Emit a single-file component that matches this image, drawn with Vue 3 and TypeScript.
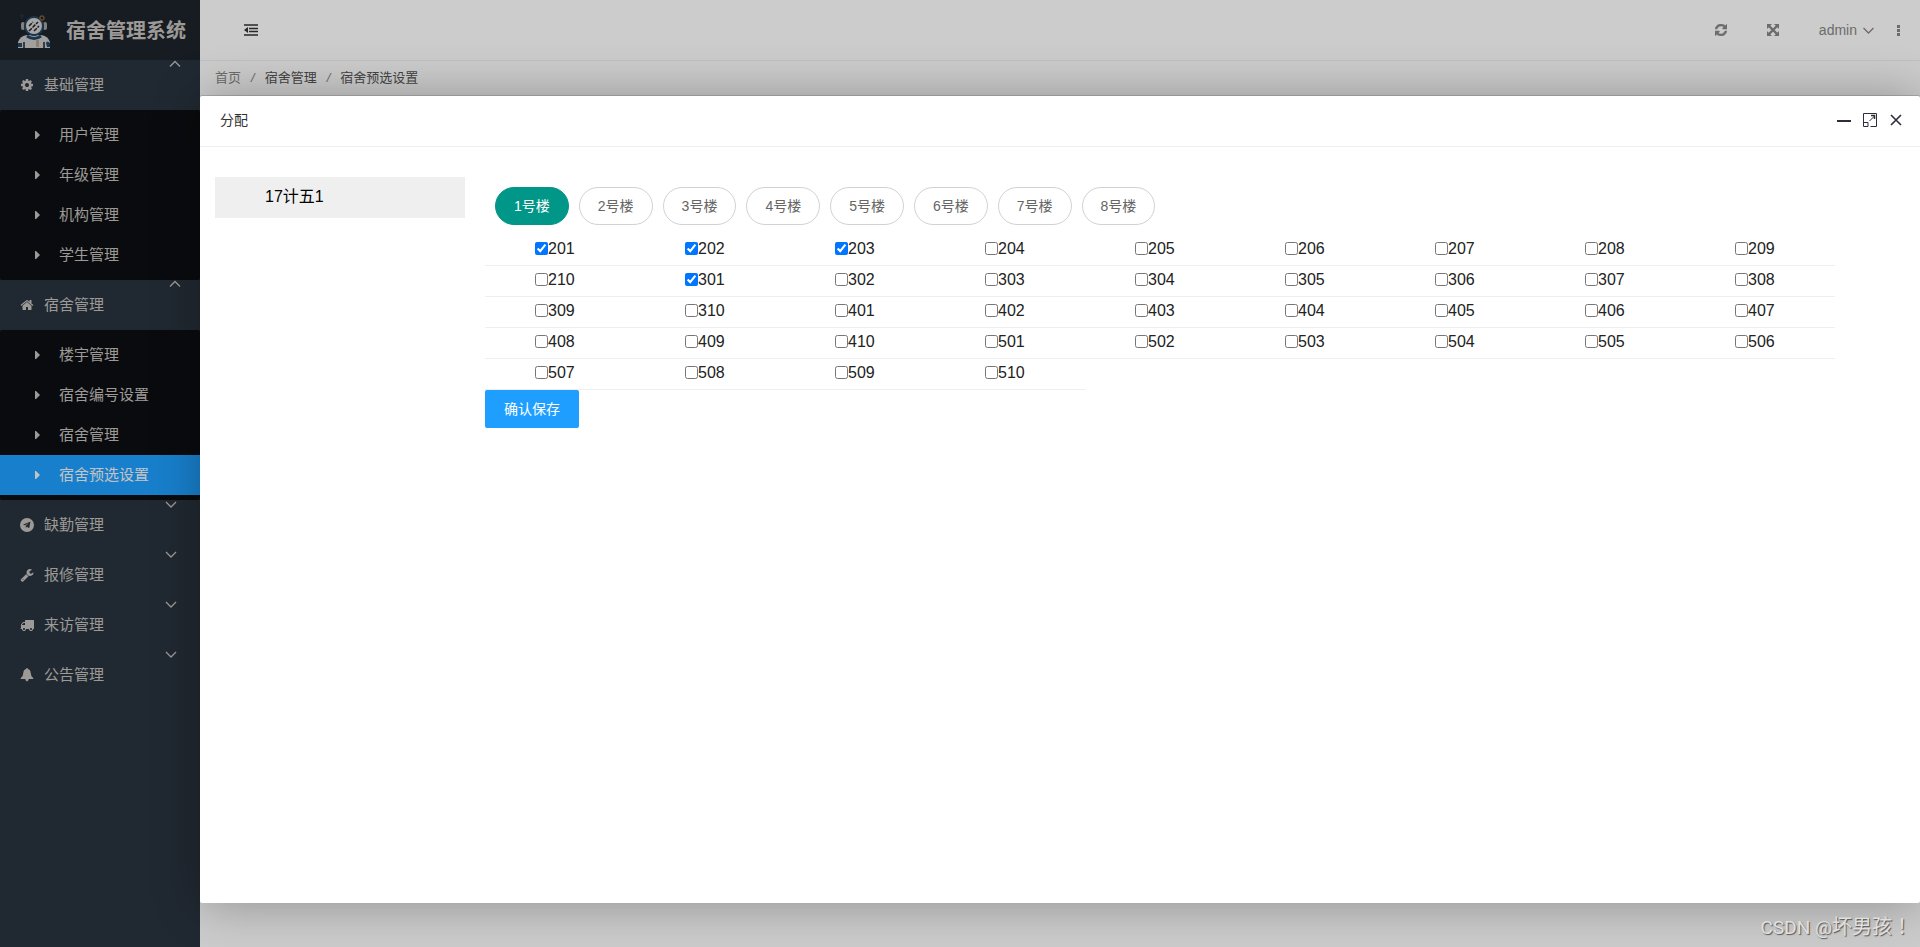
<script setup lang="ts">
import { ref } from 'vue'

interface MenuGroup {
  title: string
  icon: string
  open: boolean
  children: string[]
}

const groups = ref<MenuGroup[]>([
  { title: '基础管理', icon: 'cog', open: true, children: ['用户管理', '年级管理', '机构管理', '学生管理'] },
  { title: '宿舍管理', icon: 'home', open: true, children: ['楼宇管理', '宿舍编号设置', '宿舍管理', '宿舍预选设置'] },
  { title: '缺勤管理', icon: 'plane', open: false, children: [] },
  { title: '报修管理', icon: 'wrench', open: false, children: [] },
  { title: '来访管理', icon: 'truck', open: false, children: [] },
  { title: '公告管理', icon: 'bell', open: false, children: [] },
])

const icons: Record<string, string> = {
  cog: 'M1152 896q0-106-75-181t-181-75-181 75-75 181 75 181 181 75 181-75 75-181zm512-109v222q0 12-8 23t-20 13l-185 28q-19 54-39 91 35 50 107 138 10 12 10 25t-9 23q-27 37-99 108t-94 71q-12 0-26-9l-138-108q-44 23-91 38-16 136-29 186-7 28-36 28h-222q-14 0-24.5-8.500t-11.500-21.500l-28-184q-49-16-90-37l-141 107q-10 9-25 9-14 0-25-11-126-114-165-168-7-10-7-23 0-12 8-23 15-21 51-66.500t54-70.500q-27-50-41-99l-183-27q-13-2-21-12.500t-8-23.500v-222q0-12 8-23t19-13l186-28q14-46 39-92-40-57-107-138-10-12-10-24 0-10 9-23 26-36 98.500-107.500t94.500-71.500q13 0 26 10l138 107q44-23 91-38 16-136 29-186 7-28 36-28h222q14 0 24.500 8.500t11.500 21.500l28 184q49 16 90 37l142-107q9-9 24-9 13 0 25 10 129 119 165 170 7 8 7 22 0 12-8 23-15 21-51 66.500t-54 70.500q26 50 41 98l183 28q13 2 21 12.500t8 23.500z',
  home: 'M1472 992v480q0 26-19 45t-45 19h-384v-384h-256v384h-384q-26 0-45-19t-19-45v-480q0-1 .5-3t.5-3l575-474 575 474q1 2 1 6zm223-69l-62 74q-8 9-21 11h-3q-13 0-21-7l-692-577-692 577q-12 8-24 7-13-2-21-11l-62-74q-8-10-7-23.500t11-21.500l719-599q32-26 76-26t76 26l244 204v-195q0-14 9-23t23-9h192q14 0 23 9t9 23v408l219 182q10 8 11 21.500t-7 23.500z',
  plane: 'M896 0a896 896 0 1 0 0 1792a896 896 0 1 0 0-1792zM1335 480l-150 760q-14 62-66 36l-230-172-112 108q-22 24-52 16l18-236 428-388-530 332-228-72q-46-16 0-48l890-342q40-12 32 6z',
  wrench: 'M448 1472q0-26-19-45t-45-19-45 19-19 45 19 45 45 19 45-19 19-45zm644-420l-682 682q-37 37-90 37-52 0-91-37l-106-108q-38-36-38-90 0-53 38-91l681-681q39 98 114.500 173.500t173.500 114.500zm634-435q0 39-23 106-47 134-164.500 217.500t-258.500 83.500q-185 0-316.500-131.500t-131.500-316.500 131.500-316.500 316.500-131.500q58 0 121.500 16.500t107.500 46.500q16 11 16 28t-16 28l-293 169v224l193 107q5-3 79-48.500t135.500-81 70.500-35.500q15 0 23.500 10t8.500 25z',
  truck: 'M640 1408q0-52-38-90t-90-38-90 38-38 90 38 90 90 38 90-38 38-90zm-384-512h384v-256h-158q-13 0-22 9l-195 195q-9 9-9 22v30zm1280 512q0-52-38-90t-90-38-90 38-38 90 38 90 90 38 90-38 38-90zm256-1088v1024q0 15-4 26.500t-13.500 18.500-16.500 11.500-23.500 6-22.500 2-25.500 0-22.500-.5q0 106-75 181t-181 75-181-75-75-181h-384q0 106-75 181t-181 75-181-75-75-181h-64q-3 0-22.500.5t-25.500 0-22.500-2-23.500-6-16.500-11.500-13.500-18.500-4-26.500q0-26 19-45t45-19v-320q0-8-.5-35t0-38 2.500-34.500 6.500-37 14-30.500 22.500-30l198-198q19-19 50.500-32t58.500-13h160v-192q0-26 19-45t45-19h1024q26 0 45 19t19 45z',
  bell: 'M896 0q110 0 110 120q330 60 360 480q16 480 330 690v130h-580q0 260-220 300q-220-40-220-300h-580v-130q314-210 330-690q30-420 360-480q0-120 110-120z',
}

const current = '宿舍预选设置'
const buildings = ['1号楼', '2号楼', '3号楼', '4号楼', '5号楼', '6号楼', '7号楼', '8号楼']
const building = ref('1号楼')

const rooms: number[] = []
for (let floor = 2; floor <= 5; floor++) {
  for (let n = 1; n <= 10; n++) rooms.push(floor * 100 + n)
}
const selected = ref<number[]>([201, 202, 203, 301])
</script>

<template>
  <div class="page">
    <aside class="side">
      <div class="brand">
        <svg class="astro" viewBox="0 0 34 36" aria-hidden="true">
          <path d="M5 1v5M3 3h4" stroke="#1b3a52" stroke-width="1" fill="none" />
          <path d="M1 35v-6q2-6 9-7h14q7 1 9 7v6z" fill="#c8c8c8" />
          <path d="M10 23q7 5 14 0" stroke="#1d4466" stroke-width="3" fill="none" />
          <path d="M7 29v6M27 29v6" stroke="#1c2027" stroke-width="1.500" />
          <path d="M1 30h4v4h-4zM29 30q1-3 4 0v4h-3z" fill="#1f4668" />
          <path d="M19 27h3v7h-3z" fill="#b3a184" />
          <rect x="4" y="9" width="4" height="8" rx="2" fill="#a0a0a0" />
          <rect x="26" y="9" width="4" height="8" rx="2" fill="#a0a0a0" />
          <circle cx="17" cy="13" r="10" fill="#1c2027" />
          <circle cx="17" cy="13" r="9" fill="#d0d0d0" stroke="#26445e" stroke-width="2" />
          <path d="M12 13l4-4M12 18l9-9M17 18l5-5" stroke="#20242c" stroke-width="1.500" stroke-dasharray="4 1" />
          <circle cx="25" cy="5" r="2" fill="none" stroke="#7c5934" stroke-width="1.500" />
        </svg>
        <h1>宿舍管理系统</h1>
      </div>
      <nav>
        <section v-for="g in groups" :key="g.title">
          <button type="button" class="group" :class="{ open: g.open }" @click="g.open = !g.open">
            <svg class="ico" viewBox="0 0 1792 1792" aria-hidden="true">
              <path :d="icons[g.icon]" fill="currentColor" fill-rule="evenodd" />
            </svg>
            <span>{{ g.title }}</span>
            <svg class="chev" viewBox="0 0 12 8" aria-hidden="true">
              <path :d="g.open ? 'M1 6.500l5-5l5 5' : 'M1 2l5 5l5-5'" fill="none" stroke="currentColor" stroke-width="1.300" />
            </svg>
          </button>
          <ul v-if="g.open && g.children.length">
            <li v-for="c in g.children" :key="c">
              <a href="#" :class="{ active: c === current }">
                <svg class="caret" viewBox="0 0 5 8" aria-hidden="true"><path d="M0 0h1l4 4l-4 4h-1z" fill="currentColor" /></svg>
                {{ c }}
              </a>
            </li>
          </ul>
        </section>
      </nav>
    </aside>

    <div class="main">
      <header>
        <button type="button" aria-label="收起菜单" class="fold">
          <svg width="14" height="12" viewBox="0 0 14 12">
            <path d="M0 1h14M5 4.500h9M5 7.500h9M0 11h14" stroke="currentColor" stroke-width="1.700" fill="none" />
            <path d="M4 3v6l-4-3z" fill="currentColor" />
          </svg>
        </button>
        <div class="tools">
          <button type="button" aria-label="刷新">
            <svg width="12" height="12" viewBox="0 0 1536 1536">
              <path
                fill="currentColor"
                stroke="currentColor"
                stroke-width="70"
                d="M1511 928q0 5-1 7-64 268-268 434.500t-478 166.500q-146 0-282.500-55t-243.500-157l-129 129q-19 19-45 19t-45-19-19-45v-448q0-26 19-45t45-19h448q26 0 45 19t19 45-19 45l-137 137q71 66 161 102t187 36q134 0 250-65t186-179q11-17 53-117 8-23 30-23h192q13 0 22.500 9.500t9.500 22.500zm25-800v448q0 26-19 45t-45 19h-448q-26 0-45-19t-19-45 19-45l138-138q-148-137-349-137-134 0-250 65t-186 179q-11 17-53 117-8 23-30 23h-199q-13 0-22.500-9.500t-9.500-22.500v-7q65-268 270-434.500t480-166.500q146 0 284 55.500t245 156.500l130-129q19-19 45-19t45 19 19 45z"
              />
            </svg>
          </button>
          <button type="button" aria-label="全屏">
            <svg width="12" height="12" viewBox="0 0 12 12" fill="currentColor">
              <path d="M0 0h5l-2 2l3 3l3-3l-2-2h5v5l-2-2l-3 3l3 3l2-2v5h-5l2-2l-3-3l-3 3l2 2h-5v-5l2 2l3-3l-3-3l-2 2z" />
              <path d="M2 2l8 8M10 2l-8 8" stroke="currentColor" stroke-width="2.400" />
            </svg>
          </button>
          <button type="button" class="user">
            admin
            <svg width="11" height="7" viewBox="0 0 11 7"><path d="M.5 1l5 5l5-5" fill="none" stroke="currentColor" stroke-width="1.300" /></svg>
          </button>
          <button type="button" aria-label="更多" class="more">
            <svg width="3" height="11" viewBox="0 0 3 11" fill="currentColor"><path d="M0 0h3v3h-3zM0 4h3v3h-3zM0 8h3v3h-3z" /></svg>
          </button>
        </div>
      </header>
      <nav class="crumbs" aria-label="位置">
        <a href="#">首页</a><i>/</i><span>宿舍管理</span><i>/</i><span>宿舍预选设置</span>
      </nav>
    </div>

    <div class="shade"></div>

    <section class="dialog" role="dialog" aria-labelledby="dialog-title">
      <div class="title">
        <h2 id="dialog-title">分配</h2>
        <button type="button" aria-label="最小化">
          <svg width="14" height="14" viewBox="0 0 14 14"><path d="M0 8h14" stroke="currentColor" stroke-width="2" /></svg>
        </button>
        <button type="button" aria-label="最大化">
          <svg width="14" height="14" viewBox="0 0 14 14" fill="none" stroke="currentColor">
            <path d="M.5 13.500v-13h13v13h-6M.5 9.500h4.500v4h-4.500M6.500 8l5-5" />
            <path d="M8 2.500h3.500v3.500" stroke-width="1.500" />
          </svg>
        </button>
        <button type="button" aria-label="关闭">
          <svg width="14" height="14" viewBox="0 0 14 14"><path d="M2 2l10 10M12 2l-10 10" stroke="currentColor" stroke-width="1.600" /></svg>
        </button>
      </div>
      <div class="body">
        <ul class="classes">
          <li><button type="button">17计五1</button></li>
        </ul>
        <form class="assign" @submit.prevent>
          <div class="tabs">
            <button v-for="b in buildings" :key="b" type="button" :class="{ on: b === building }" @click="building = b">{{ b }}</button>
          </div>
          <div class="rooms">
            <label v-for="r in rooms" :key="r"><input v-model="selected" type="checkbox" :value="r" />{{ r }}</label>
          </div>
          <button type="submit" class="save">确认保存</button>
        </form>
      </div>
    </section>

    <div class="mark"><span>CSDN @</span>坏男孩！</div>
  </div>
</template>

<style>
body {
  margin: 0;
}
</style>

<style scoped>
.page {
  position: relative;
  display: flex;
  min-height: 100vh;
  overflow: hidden;
  background: #fff;
  color: #333;
  font: 14px/24px "Liberation Sans", "Noto Sans CJK SC", sans-serif;
}
h1,
h2,
ul {
  margin: 0;
  padding: 0;
  list-style: none;
}
button {
  margin: 0;
  padding: 0;
  border: 0;
  background: none;
  color: inherit;
  font: inherit;
  cursor: pointer;
}
a {
  color: inherit;
  text-decoration: none;
}
svg {
  display: block;
  flex: none;
}
.side {
  flex: none;
  width: 200px;
  background: #28333e;
  color: #c3c0bd;
  font-size: 15px;
}
.brand {
  display: flex;
  align-items: center;
  gap: 15px;
  box-sizing: border-box;
  height: 60px;
  padding: 2px 0 0 17px;
  background: #1c232b;
}
.astro {
  width: 34px;
  height: 36px;
}
.brand h1 {
  font-size: 20px;
  white-space: nowrap;
}
.group {
  display: flex;
  align-items: center;
  width: 100%;
  height: 50px;
  padding: 0 23px 0 20px;
}
.group.open {
  padding-right: 19px;
}
.ico {
  width: 14px;
  height: 14px;
  margin-right: 10px;
}
.chev {
  width: 12px;
  height: 8px;
  margin-left: auto;
  margin-bottom: 42px;
  align-self: flex-end;
}
.side ul {
  padding: 5px 0;
  border-radius: 2px;
  background: #0d0e12;
}
.side li a {
  display: flex;
  align-items: center;
  gap: 19px;
  height: 40px;
  padding-left: 35px;
}
.side li a.active {
  background: #1e9fff;
  color: #f4f4f4;
}
.caret {
  width: 5px;
  height: 8px;
}
.main {
  flex: 1;
}
header {
  display: flex;
  align-items: center;
  justify-content: space-between;
  height: 60px;
  padding: 0 20px 0 44px;
  border-bottom: 1px solid #f2f2f2;
}
.tools {
  display: flex;
  align-items: center;
  gap: 40px;
  color: #888;
}
.user {
  display: flex;
  align-items: center;
  gap: 6px;
}
.more {
  margin-left: -17px;
}
.crumbs {
  display: flex;
  gap: 10px;
  padding: 5px 15px;
  font-size: 13px;
  color: #555;
}
.crumbs a,
.crumbs i {
  color: #888;
}
.shade {
  position: absolute;
  inset: 0;
  background: rgba(0, 0, 0, 0.2);
}
.dialog {
  position: absolute;
  inset: 96px 0 44px 200px;
  border-radius: 2px;
  background: #fff;
  box-shadow: 0 -1px 0 rgba(0, 0, 0, 0.15), 1px 1px 50px rgba(0, 0, 0, 0.3);
}
.title {
  display: flex;
  align-items: center;
  gap: 12px;
  height: 48px;
  padding: 0 17px 2px 20px;
  border-bottom: 1px solid #eee;
  color: #2e2d3c;
}
.title h2 {
  flex: 1;
  color: #333;
  font-size: 14px;
  font-weight: 400;
}
.body {
  display: flex;
  gap: 20px;
  padding: 30px 15px;
}
.classes {
  flex: none;
  width: 250px;
}
.classes button {
  display: block;
  width: 100%;
  height: 41px;
  padding: 0 0 2px 50px;
  background: #efefef;
  color: #000;
  font-size: 16px;
  text-align: left;
}
.assign {
  flex: 1;
}
.tabs {
  display: flex;
  gap: 10px;
  padding: 10px;
}
.tabs button {
  height: 38px;
  padding: 0 18px;
  border: 1px solid #d2d2d2;
  border-radius: 19px;
  color: #666;
}
.tabs button.on {
  border-color: #009688;
  background: #009688;
  color: #fff;
}
.rooms {
  display: grid;
  grid-template-columns: repeat(auto-fill, 150px);
}
.rooms label {
  display: flex;
  align-items: center;
  height: 28px;
  padding: 0 0 2px 50px;
  border-bottom: 1px solid #eee;
  color: #222;
  font-size: 16px;
}
.rooms input {
  width: 13px;
  height: 13px;
  margin: 0 0 2px;
}
.save {
  display: block;
  height: 38px;
  padding: 0 19px;
  border-radius: 2px;
  background: #1e9fff;
  color: #fff;
}
.mark {
  position: absolute;
  right: 8px;
  bottom: 7px;
  color: #e0e0e0;
  font-family: "Noto Sans CJK TC", sans-serif;
  font-size: 20px;
  text-shadow: 1px 1px 1px #555;
}
.mark span {
  font-family: Roboto, sans-serif;
  font-size: 19px;
}
</style>
